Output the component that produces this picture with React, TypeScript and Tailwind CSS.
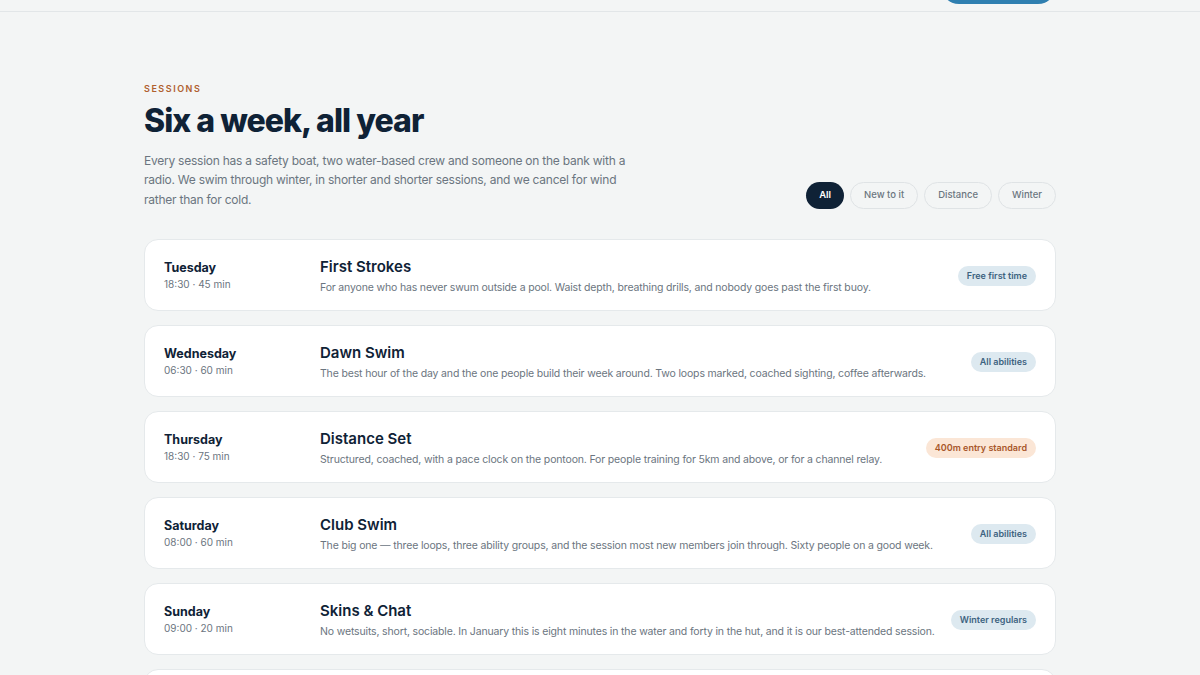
import { useState } from 'react';

interface Session {
  day: string;
  time: string;
  title: string;
  blurb: string;
  tag: string;
  tone: 'blue' | 'orange';
}

const sessions: Session[] = [
  {
    day: 'Tuesday',
    time: '18:30 · 45 min',
    title: 'First Strokes',
    blurb: 'For anyone who has never swum outside a pool. Waist depth, breathing drills, and nobody goes past the first buoy.',
    tag: 'Free first time',
    tone: 'blue',
  },
  {
    day: 'Wednesday',
    time: '06:30 · 60 min',
    title: 'Dawn Swim',
    blurb: 'The best hour of the day and the one people build their week around. Two loops marked, coached sighting, coffee afterwards.',
    tag: 'All abilities',
    tone: 'blue',
  },
  {
    day: 'Thursday',
    time: '18:30 · 75 min',
    title: 'Distance Set',
    blurb: 'Structured, coached, with a pace clock on the pontoon. For people training for 5km and above, or for a channel relay.',
    tag: '400m entry standard',
    tone: 'orange',
  },
  {
    day: 'Saturday',
    time: '08:00 · 60 min',
    title: 'Club Swim',
    blurb: 'The big one — three loops, three ability groups, and the session most new members join through. Sixty people on a good week.',
    tag: 'All abilities',
    tone: 'blue',
  },
  {
    day: 'Sunday',
    time: '09:00 · 20 min',
    title: 'Skins & Chat',
    blurb: 'No wetsuits, short, sociable. In January this is eight minutes in the water and forty in the hut, and it is our best-attended session.',
    tag: 'Winter regulars',
    tone: 'blue',
  },
];

const filters = ['All', 'New to it', 'Distance', 'Winter'];

export default function App() {
  const [active, setActive] = useState<string>('All');

  return (
    <div className="h-screen overflow-hidden bg-[#f3f5f5] font-['Inter',sans-serif] text-[#0f2236]">
      {/* Header (scrolled mostly out of view) */}
      <header className="h-[12px] overflow-hidden border-b border-[#e2e6e8]">
        <div className="mx-auto flex h-full max-w-[960px] items-end justify-between px-6 pb-[7px]">
          <div className="mb-[8px] ml-[-20px] h-[10px] w-[10px] rounded-full bg-[#4cc3e0]" />
          <div className="h-[36px] w-[115px] rounded-full bg-[#2f7fb0]" />
        </div>
      </header>

      <main className="mx-auto max-w-[912px] pt-[70px]">
        {/* Intro */}
        <div className="flex items-end justify-between">
          <div>
            <p className="text-[9px] font-semibold tracking-[0.17em] text-[#b0602e]">SESSIONS</p>
            <h1 className="mt-[5px] text-[32px] font-extrabold tracking-[-0.03em] leading-[40px]">
              Six a week, all year
            </h1>
            <p className="mt-[10px] max-w-[500px] text-[12px] tracking-[-0.02em] leading-[19.5px] text-[#6b7580]">
              Every session has a safety boat, two water-based crew and someone on the bank with a radio. We
              swim through winter, in shorter and shorter sessions, and we cancel for wind rather than for cold.
            </p>
          </div>
          <div className="flex gap-[6px]">
            {filters.map((f) => (
              <button
                key={f}
                onClick={() => setActive(f)}
                className={
                  f === active
                    ? 'h-[27px] rounded-full bg-[#0f2236] px-[13px] text-[9.5px] font-semibold text-white'
                    : 'h-[27px] rounded-full border border-[#dfe3e5] px-[13px] text-[9.5px] font-medium text-[#6b7580]'
                }
              >
                {f}
              </button>
            ))}
          </div>
        </div>

        {/* Session list */}
        <div className="mt-[30px] flex flex-col gap-[14px]">
          {sessions.map((s, i) => (
            <div
              key={i}
              className="flex h-[72px] shrink-0 items-center rounded-[14px] border border-[#e5e9eb] bg-white px-[19px]"
            >
              <div className="mt-[2px] w-[156px] shrink-0">
                <p className="text-[12.5px] font-bold leading-[16px]">{s.day}</p>
                <p className="mt-[1px] text-[10px] text-[#6b7580]">{s.time}</p>
              </div>
              <div className="mt-[3px] min-w-0 flex-1">
                <p className="text-[15px] font-semibold leading-[19px]">{s.title}</p>
                <p className="mt-[4px] whitespace-nowrap text-[10.5px] tracking-[-0.015em] text-[#6b7580]">
                  {s.blurb}
                </p>
              </div>
              <span
                className={
                  s.tone === 'orange'
                    ? 'ml-4 mt-[2px] shrink-0 rounded-full bg-[#fbe6d6] px-[9px] py-[3px] text-[9px] font-semibold text-[#a8562a]'
                    : 'ml-4 mt-[2px] shrink-0 rounded-full bg-[#dde9f0] px-[9px] py-[3px] text-[9px] font-semibold text-[#3d6380]'
                }
              >
                {s.tag}
              </span>
            </div>
          ))}
          {/* next card, starting just above the fold */}
          <div className="h-[72px] shrink-0 rounded-[14px] border border-[#e5e9eb] bg-white" />
        </div>
      </main>
    </div>
  );
}
